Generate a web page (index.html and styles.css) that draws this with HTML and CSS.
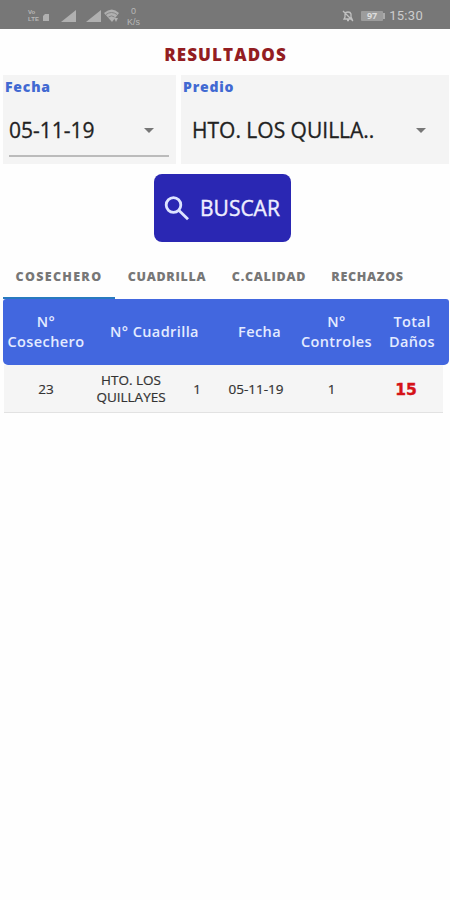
FILE: index.html
```
<!DOCTYPE html>
<html lang="es">
<head>
  <meta charset="UTF-8">
  <title>Resultados</title>
  <link rel="stylesheet" href="styles.css">
</head>
<body>
  <header class="status-bar">
    <div class="status-left">
      <div class="volte"><span>Vo</span><span>LTE</span></div>
      <svg class="sim" width="6" height="7" viewBox="0 0 6 7"><path d="M2 0h4v7H0V2z"/></svg>
      <svg class="signal" width="15" height="12" viewBox="0 0 15 12"><path d="M15 0v12H0z"/></svg>
      <svg class="signal second" width="15" height="12" viewBox="0 0 15 12"><path d="M15 0v12H0z"/></svg>
      <svg class="wifi" width="16" height="14" viewBox="0 0 16 14">
        <path d="M0 4Q8-3 15 4L8 13z"/>
        <path class="wave" d="M2 5.500q5.500-4 11 0M4.500 8q3-2.300 6 0"/>
        <path d="M10 9l2 4 2-4z"/>
      </svg>
      <div class="speed"><span>0</span><span>K/s</span></div>
    </div>
    <div class="status-right">
      <svg class="bell" width="12" height="12" viewBox="0 0 12 12">
        <path d="M2 9h8L9 7V4Q8.500 2 6 2T3 4v3zM5 10.500h2M1 1l10 10"/>
      </svg>
      <div class="battery">97</div>
      <i class="battery-tip"></i>
      <span class="clock">15:30</span>
    </div>
  </header>

  <h1>RESULTADOS</h1>

  <div class="filters">
    <div class="filter">
      <label>Fecha</label>
      <div class="select date"><span>05-11-19</span><i class="arrow"></i></div>
    </div>
    <div class="filter">
      <label>Predio</label>
      <div class="select place"><span>HTO. LOS QUILLA..</span><i class="arrow"></i></div>
    </div>
  </div>

  <button class="search">
    <svg width="26" height="25" viewBox="0 0 26 25"><circle cx="9.500" cy="9" r="7.300"/><path d="M14.500 14l9.500 9.300"/></svg>
    <span>BUSCAR</span>
  </button>

  <nav class="tabs">
    <a class="tab active">COSECHERO</a>
    <a class="tab">CUADRILLA</a>
    <a class="tab">C.CALIDAD</a>
    <a class="tab">RECHAZOS</a>
  </nav>

  <div class="table-head">
    <div>N°<br>Cosechero</div>
    <div>N° Cuadrilla</div>
    <div>Fecha</div>
    <div>N°<br>Controles</div>
    <div>Total<br>Daños</div>
  </div>
  <div class="table-row">
    <div>23</div>
    <div>HTO. LOS<br>QUILLAYES</div>
    <div>1</div>
    <div>05-11-19</div>
    <div>1</div>
    <div class="total">15</div>
  </div>
</body>
</html>
```
FILE: styles.css
```
* {
  box-sizing: border-box;
}

body {
  margin: 0;
  height: 900px;
  background: #fefefe;
  font-family: "Open Sans", "Noto Sans", sans-serif;
  color: #333;
  overflow: hidden;
}

.status-bar {
  display: flex;
  justify-content: space-between;
  height: 29px;
  padding: 2px 27px 0 28px;
  background: #777;
  color: #b8b8b8;
}

.status-left,
.status-right {
  display: flex;
  align-items: center;
}

.status-bar svg {
  fill: #b0b0b0;
}

.volte {
  display: flex;
  flex-direction: column;
  font-family: "Liberation Sans", sans-serif;
  font-size: 6px;
  font-weight: 700;
  line-height: 7px;
  width: 15px;
}

.sim {
  margin-top: 4px;
}

.signal {
  margin-left: 12px;
}

.signal.second {
  margin-left: 10px;
}

.wifi {
  margin-left: 3px;
}

.status-bar .wave {
  fill: none;
  stroke: #858585;
}

.speed {
  display: flex;
  flex-direction: column;
  align-items: center;
  margin-left: 7px;
  padding-top: 2px;
  font-family: "Liberation Sans", sans-serif;
  font-size: 9px;
  line-height: 11px;
}

.status-bar .bell {
  fill: none;
  stroke: #c0c0c0;
  stroke-width: 1.3;
}

.battery {
  width: 22px;
  height: 10px;
  margin-left: 7px;
  border-radius: 1px;
  background: #9c9c9c;
  color: #ddd;
  font-size: 9px;
  font-weight: 700;
  line-height: 10px;
  text-align: center;
}

.battery-tip {
  width: 2px;
  height: 6px;
  margin-right: 4px;
  background: #aaa;
}

.clock {
  font-family: Roboto, sans-serif;
  font-size: 13px;
  letter-spacing: 0.3px;
  color: #ccc;
}

h1 {
  height: 46px;
  margin: 0;
  padding-left: 1px;
  color: #931d22;
  font-size: 17px;
  font-weight: 800;
  letter-spacing: 1.1px;
  line-height: 51px;
  text-align: center;
}

.filters {
  display: grid;
  grid-template-columns: 173px 268px;
  gap: 5px;
  padding-left: 3px;
}

.filter {
  height: 89px;
  background: #f4f4f4;
}

.filter label {
  display: block;
  padding-left: 2px;
  color: #4169d2;
  font-size: 14px;
  font-weight: 800;
  letter-spacing: 0.8px;
  line-height: 23px;
}

.select {
  display: flex;
  align-items: center;
  justify-content: space-between;
  height: 59px;
  padding-top: 5px;
  color: #222;
  font-size: 21px;
  -webkit-text-stroke: 0.3px #222;
}

.date {
  margin: 0 7px 0 6px;
  padding-top: 7px;
  padding-right: 15px;
  border-bottom: 2px solid #bbb;
}

.place {
  margin-left: 11px;
  padding-right: 23px;
}

.arrow {
  border: 5px solid transparent;
  border-top-color: #777;
  border-bottom: 0;
}

.search {
  display: flex;
  align-items: center;
  width: 137px;
  height: 68px;
  margin: 10px 0 0 154px;
  padding: 0 0 0 10px;
  border: 0;
  border-radius: 8px;
  background: #2a27b3;
  color: #eef;
  font: 21px "Open Sans", sans-serif;
  -webkit-text-stroke: 0.4px #eef;
}

.search svg {
  margin-right: 10px;
  fill: none;
  stroke: #dde4ff;
  stroke-width: 2.8;
}

.tabs {
  display: grid;
  grid-template-columns: 112px 104px 100px 97px;
  height: 57px;
  padding-left: 3px;
  font-size: 12.5px;
  font-weight: 800;
  letter-spacing: 0.7px;
  line-height: 69px;
  color: #777;
  text-align: center;
}

.tab {
  height: 57px;
}

.tab.active {
  border-bottom: 2px solid #287abf;
  letter-spacing: 1.3px;
}

.table-head,
.table-row {
  display: grid;
  align-items: center;
  text-align: center;
}

.table-head {
  grid-template-columns: 86px 131px 79px 75px 76px;
  width: 446px;
  height: 66px;
  margin-left: 3px;
  border-radius: 3px 3px 5px 5px;
  background: #4267df;
  color: #e4ebff;
  font-size: 14.5px;
  font-weight: 600;
  letter-spacing: 0.4px;
  line-height: 20px;
}

.table-row {
  grid-template-columns: 84px 86px 46px 72px 79px 70px;
  width: 439px;
  height: 48px;
  margin-left: 4px;
  padding-top: 1px;
  border-bottom: 1px solid #e2e2e2;
  background: #f5f5f5;
  font-size: 13.5px;
  line-height: 17px;
  -webkit-text-stroke: 0.2px #333;
}

.total {
  padding-top: 3px;
  color: #d51218;
  font-family: "DejaVu Sans", sans-serif;
  font-size: 15.5px;
  font-weight: 700;
  -webkit-text-stroke: 0.4px #d51218;
}
```
